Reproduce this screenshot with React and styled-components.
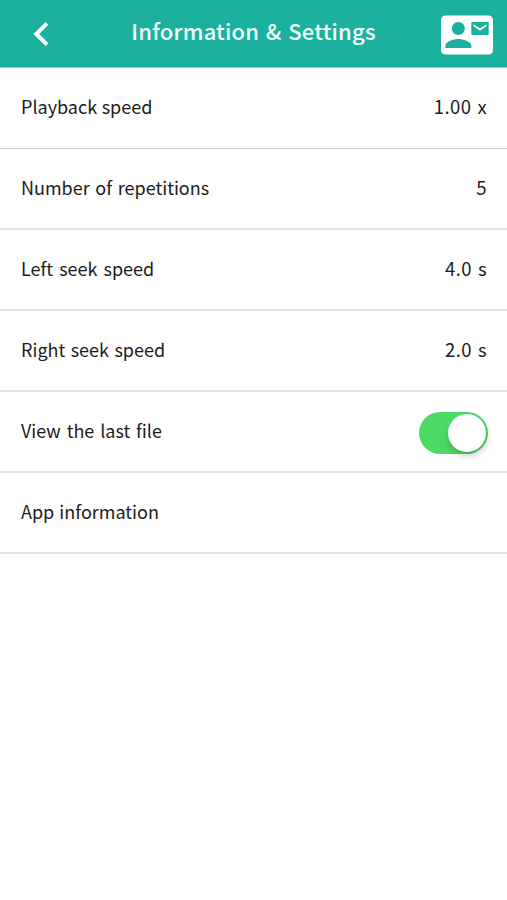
import { useState } from 'react';

import styled, { createGlobalStyle } from 'styled-components';
import { MdContactMail } from 'react-icons/md';

const GlobalStyle = createGlobalStyle`
    * {
        box-sizing: border-box;
    }

    body {
        background: #fff;
        color: #1c1c1c;
        font-family: 'Noto Sans CJK KR', 'Noto Sans', sans-serif;
        margin: 0;
    }
`;

const Header = styled.header`
    align-items: center;
    background: #1cb19e;
    border-bottom: 1px solid #8ed6cd;
    color: #fff;
    display: grid;
    grid-template-columns: 83px 1fr 83px;
    height: 68px;
`;

const BackButton = styled.button`
    background: none;
    border: 0;
    color: inherit;
    cursor: pointer;
    display: flex;
    padding: 0 0 0 32px;
`;

const Title = styled.h1`
    color: #effffc;
    font-size: 22px;
    font-weight: 500;
    letter-spacing: 0.2px;
    line-height: 30px;
    margin: 0;
    padding-bottom: 7px;
    text-align: center;
    white-space: nowrap;
    word-spacing: 1.5px;
`;

const ContactButton = styled.button`
    background: none;
    border: 0;
    color: inherit;
    cursor: pointer;
    display: flex;
    justify-self: end;
    padding: 2px 14.5px 0 0;
`;

const List = styled.ul`
    list-style: none;
    margin: 0;
    padding: 0;
`;

const Row = styled.li`
    align-items: center;
    border-bottom: 2px solid #e2e2e2;
    display: flex;
    height: 81px;
    justify-content: space-between;
    padding: 0 20px 0 21px;

    &:first-child {
        border-bottom: 1px solid #cfcfcf;
    }
`;

const Label = styled.span`
    font-size: 18px;
    line-height: 28px;
    padding-bottom: 4px;
    white-space: nowrap;
    word-spacing: ${({ $gap = 1.5 }) => $gap}px;
`;

const Value = styled.span`
    font-size: 18.5px;
    letter-spacing: 0.4px;
    line-height: 28px;
    padding-bottom: 4px;
    white-space: nowrap;
    word-spacing: 1.5px;
`;

const Toggle = styled.button`
    background: #4cd964;
    border: 0;
    border-radius: 21px;
    cursor: pointer;
    display: flex;
    height: 42px;
    justify-content: ${({ $on }) => ($on ? 'flex-end' : 'flex-start')};
    margin: 2px -1px 0 0;
    padding: 2px;
    width: 69px;
`;

const Knob = styled.span`
    background: #fff;
    border-radius: 50%;
    box-shadow: 1px 4px 7px rgba(0, 0, 0, 0.2);
    height: 38px;
    width: 38px;
`;

const settings = [
    { label: 'Playback speed', value: '1.00 x', gap: 0.5 },
    { label: 'Number of repetitions', value: '5', gap: 1.6 },
    { label: 'Left seek speed', value: '4.0 s', gap: 2 },
    { label: 'Right seek speed', value: '2.0 s', gap: 1.4 }
];

const App = () => {
    const [viewLast, setViewLast] = useState(true);

    return (
        <>
            <GlobalStyle />
            <Header>
                <BackButton aria-label='Back'>
                    <svg width='18' height='28' viewBox='0 0 18 28'>
                        <path
                            d='M15 3.3 4.3 14 15 24.7'
                            fill='none'
                            stroke='currentColor'
                            strokeWidth='4'
                        />
                    </svg>
                </BackButton>
                <Title>Information &amp; Settings</Title>
                <ContactButton aria-label='Contact'>
                    <MdContactMail size={52} />
                </ContactButton>
            </Header>
            <List>
                {settings.map(({ label, value, gap }) => (
                    <Row key={label}>
                        <Label $gap={gap}>{label}</Label>
                        <Value>{value}</Value>
                    </Row>
                ))}
                <Row>
                    <Label $gap={1.8}>View the last file</Label>
                    <Toggle
                        role='switch'
                        aria-checked={viewLast}
                        aria-label='View the last file'
                        $on={viewLast}
                        onClick={() => setViewLast(!viewLast)}
                    >
                        <Knob />
                    </Toggle>
                </Row>
                <Row>
                    <Label $gap={1}>App information</Label>
                </Row>
            </List>
        </>
    );
};

export default App;
